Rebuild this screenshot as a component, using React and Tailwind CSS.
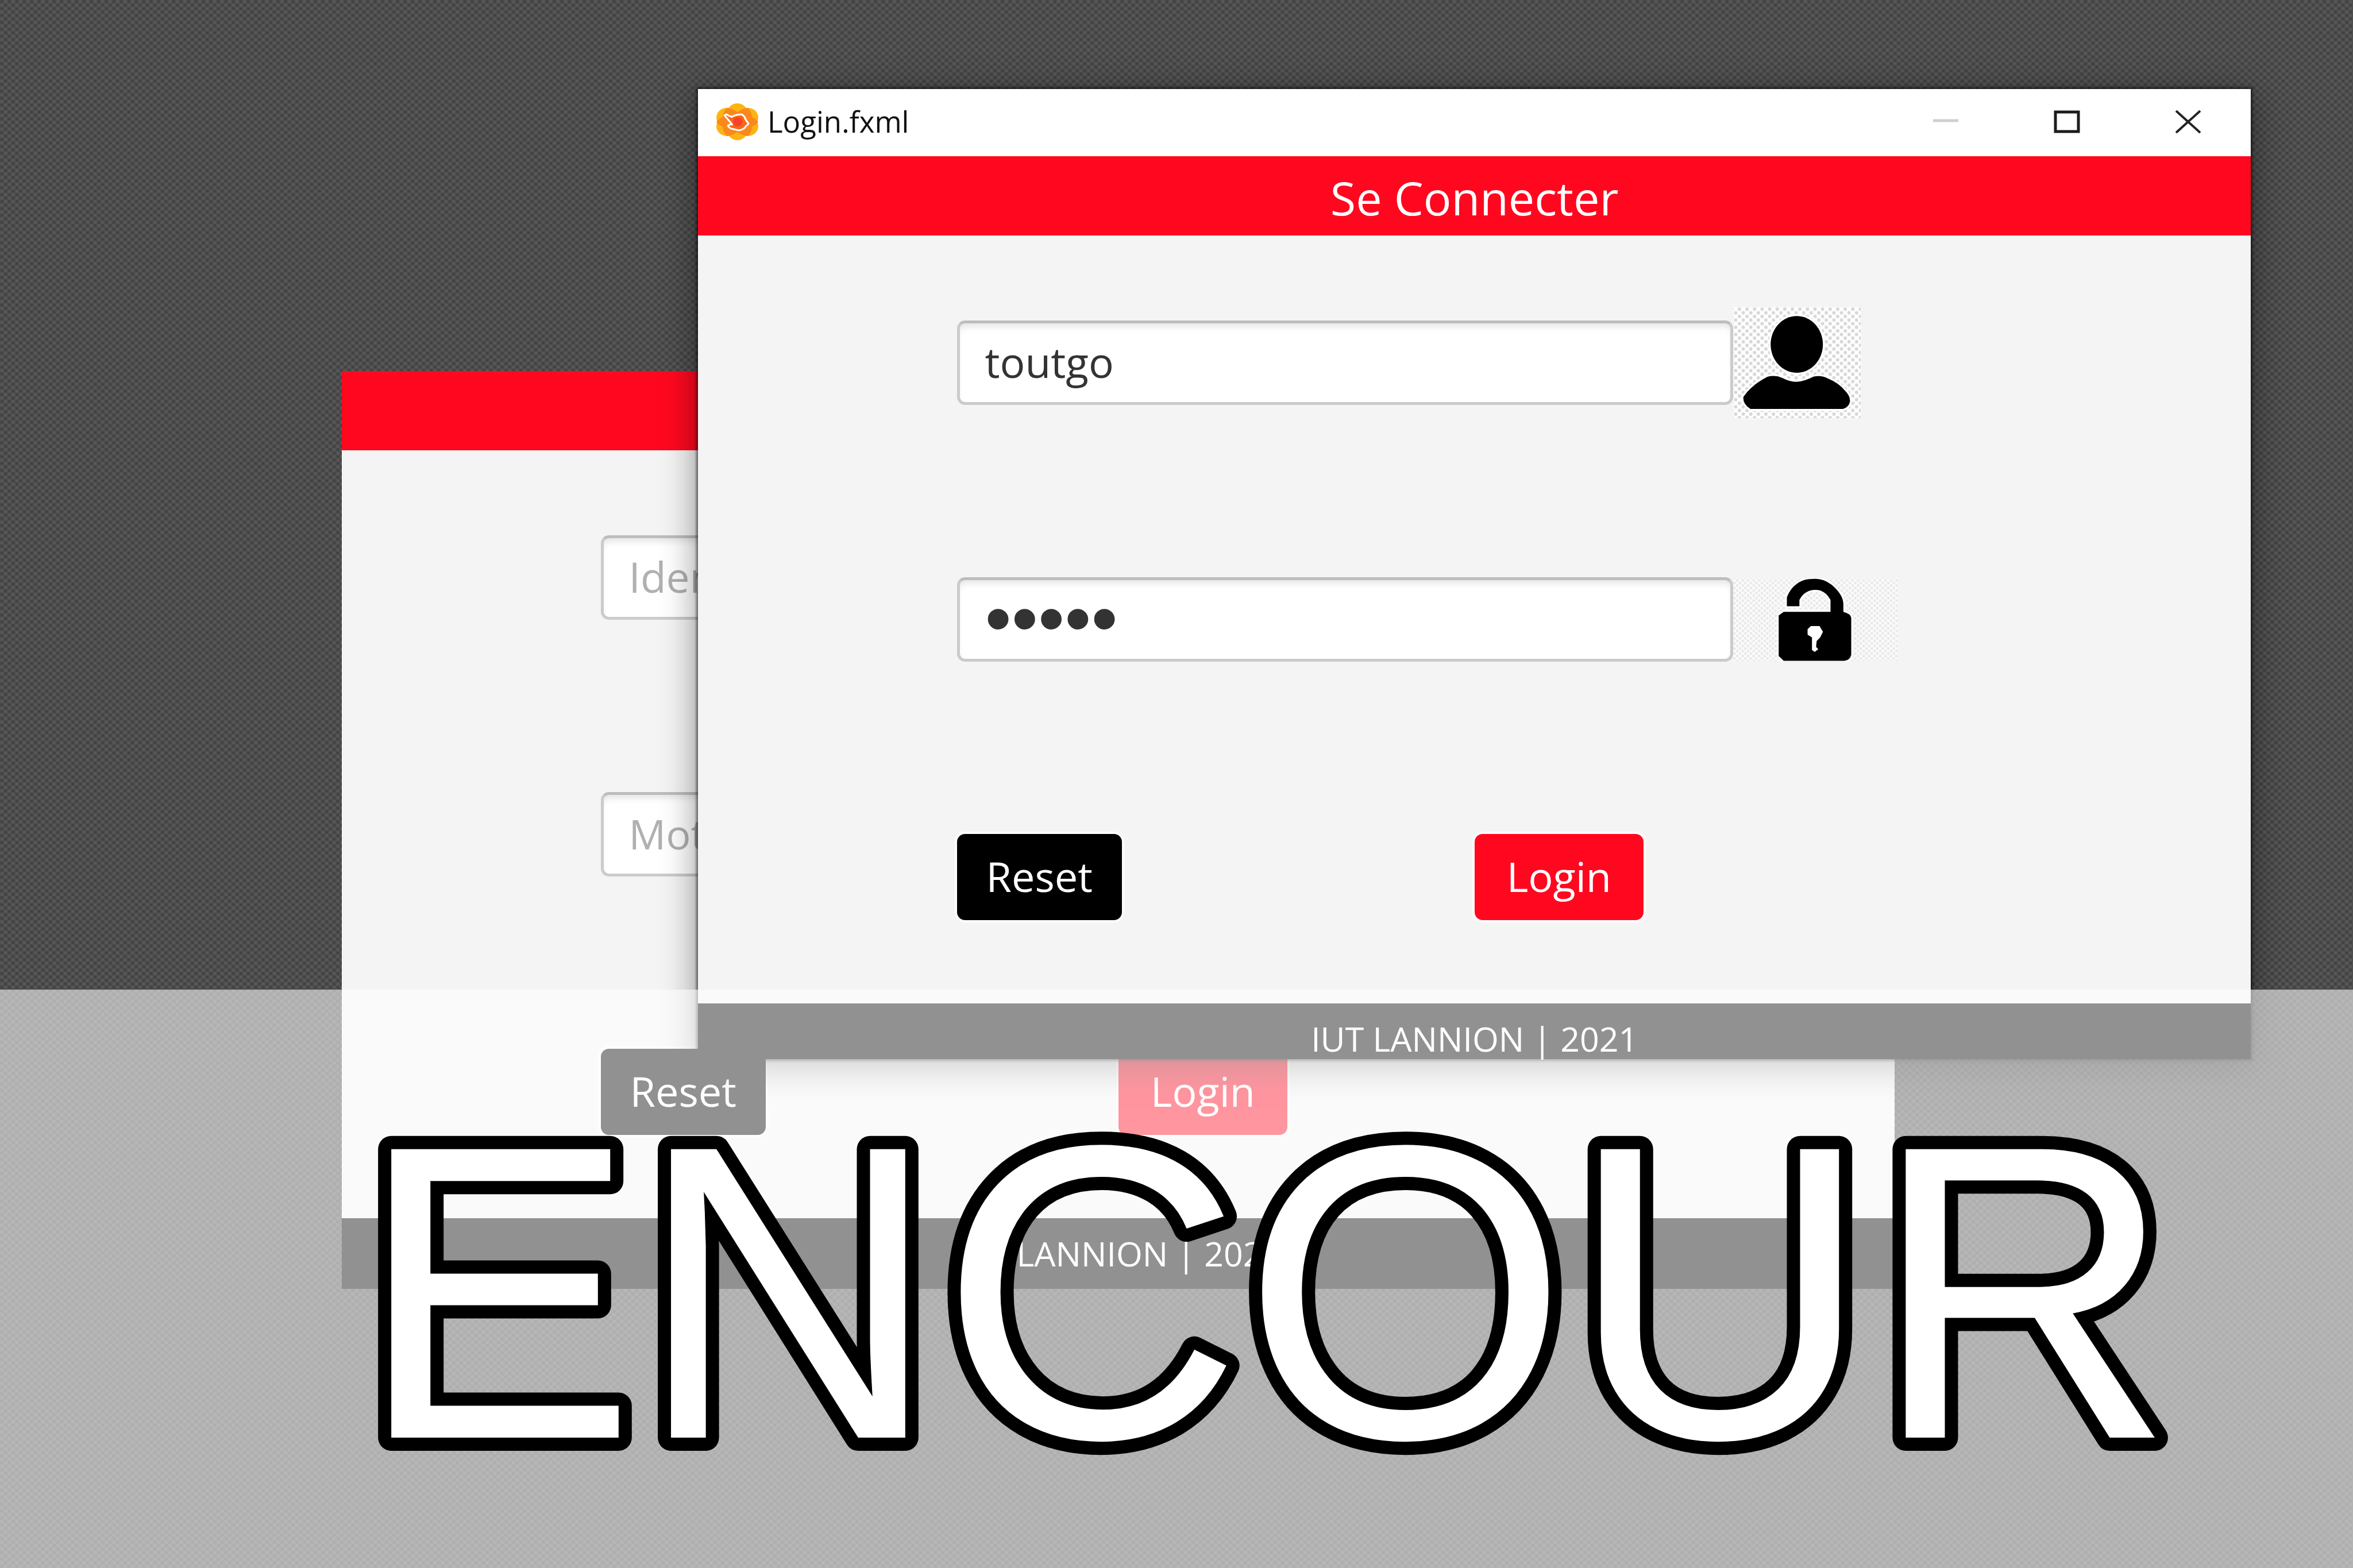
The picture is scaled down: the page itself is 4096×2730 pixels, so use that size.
import React from "react";

function AppIcon() {
  return (
    <svg viewBox="36 28 266 234" preserveAspectRatio="none" className="h-16 w-[73px]" aria-hidden="true">
      <g fill="#fdb412">
        <ellipse cx="169" cy="92" rx="66" ry="64" />
        <ellipse cx="169" cy="198" rx="66" ry="64" />
        <ellipse cx="104" cy="118" rx="68" ry="62" />
        <ellipse cx="234" cy="118" rx="68" ry="62" />
        <ellipse cx="104" cy="174" rx="68" ry="62" />
        <ellipse cx="234" cy="174" rx="68" ry="62" />
      </g>
      <path d="M104 56 Q140 60 169 84 Q198 60 234 56 Q262 80 262 116 Q290 128 301 146 Q290 168 262 176 Q262 212 234 236 Q198 232 169 210 Q140 232 104 236 Q78 212 76 176 Q48 168 37 146 Q48 128 76 116 Q78 80 104 56 Z" fill="#f9891c" />
      <path d="M88 104 Q100 92 114 106 L134 114 Q158 98 196 98 Q214 106 220 128 L240 158 L222 174 Q216 192 178 200 L136 190 Q112 182 110 170 L124 162 L136 162 Z" fill="#fa661a" stroke="#fff" strokeWidth="11" strokeLinejoin="round" />
      <circle cx="172" cy="146" r="30" fill="#f5432a" />
    </svg>
  );
}

function UserIcon() {
  return (
    <svg viewBox="130 100 810 705" preserveAspectRatio="none" className="h-[193px] w-[222px]" aria-hidden="true">
      <defs>
        <pattern id="user-dots" x="146" y="100" width="48" height="46" patternUnits="userSpaceOnUse">
          <rect width="48" height="46" fill="#fff" />
          <circle cx="24" cy="12" r="11" fill="#d8d8d8" />
          <circle cx="0" cy="35" r="11" fill="#d8d8d8" />
          <circle cx="48" cy="35" r="11" fill="#d8d8d8" />
        </pattern>
      </defs>
      <rect x="130" y="100" width="810" height="705" fill="url(#user-dots)" />
      <g stroke="#fff" strokeWidth="24" paintOrder="stroke">
        <ellipse cx="534" cy="336" rx="166" ry="180" />
        <path d="M240 747 Q190 715 195 670 Q250 590 350 541 Q400 530 440 548 Q490 574 534 574 Q580 572 640 541 Q690 530 730 552 Q800 580 840 630 Q875 665 872 700 Q865 735 828 747 Z" />
      </g>
    </svg>
  );
}

function LockIcon() {
  return (
    <svg viewBox="130 85 1050 525" preserveAspectRatio="none" className="h-[144px] w-[287px]" aria-hidden="true">
      <defs>
        <pattern id="lock-dots" x="138" y="90" width="35" height="32" patternUnits="userSpaceOnUse">
          <rect width="35" height="32" fill="#fafafa" />
          <circle cx="18" cy="8" r="8" fill="#e7e7e7" />
          <circle cx="0" cy="24" r="8" fill="#e7e7e7" />
          <circle cx="35" cy="24" r="8" fill="#e7e7e7" />
        </pattern>
      </defs>
      <rect x="130" y="85" width="1050" height="525" fill="url(#lock-dots)" />
      <path
        d="M420 320 L452 297 L750 297 L750 222 Q715 158 655 158 Q585 158 552 222 L552 262 L472 262 L472 205 Q500 130 570 100 Q600 88 655 88 Q710 88 760 128 Q832 190 832 250 L832 297 Q880 310 882 335 L882 570 Q875 605 840 608 L452 608 L420 578 Z"
        stroke="#fff" strokeWidth="22" paintOrder="stroke"
      />
      <path d="M625 388 L680 388 L702 424 L684 460 L662 482 L658 520 L672 534 L650 552 L632 540 L632 460 L604 442 L604 408 Z" fill="#fff" />
    </svg>
  );
}

function TitleBar({ title }) {
  return (
    <div className="flex h-[117px] items-center bg-white pb-1 pl-8 pr-1">
      <AppIcon />
      <span className="ml-4 flex-1 text-[51px] leading-none text-[#111]">{title}</span>
      <button type="button" aria-label="Minimize" disabled className="flex h-full w-[211px] items-center justify-center">
        <svg viewBox="0 0 46 40" className="h-10 w-[46px]"><path d="M1 18 H45" stroke="#cfcfcf" strokeWidth="5" /></svg>
      </button>
      <button type="button" aria-label="Maximize" className="flex h-full w-[211px] items-center justify-center">
        <svg viewBox="0 0 46 40" className="h-10 w-[46px]"><rect x="3" y="3" width="40" height="34" fill="none" stroke="#1c1c1c" strokeWidth="5" /></svg>
      </button>
      <button type="button" aria-label="Close" className="flex h-full w-[211px] items-center justify-center">
        <svg viewBox="0 0 46 40" className="h-10 w-[46px]"><path d="M2 1 L44 39 M44 1 L2 39" stroke="#222" strokeWidth="4" /></svg>
      </button>
    </div>
  );
}

const fieldClass =
  "col-span-3 col-start-2 h-[147px] w-full min-w-0 rounded-[14px] border-[5px] border-[#cbcbcb] border-t-[#bdbdbd] bg-white pb-1 pl-11 pr-4 text-[#333] outline-none placeholder:text-[#b0b0b0] shadow-[inset_0_10px_12px_-4px_rgba(0,0,0,0.1)]";

const buttonClass =
  "h-[150px] rounded-[14px] pb-1 text-[72px] leading-none text-white shadow-[0_0_3px_4px_rgba(255,255,255,0.8)]";

function LoginForm({ id, user, password, icons, footerClass }) {
  const passwordText = password ? "font-['Liberation_Sans',sans-serif] text-[132px]" : "text-[72px]";
  return (
    <form className="flex flex-col bg-[#f4f4f4]" onSubmit={(e) => e.preventDefault()}>
      <h1 className="flex h-[138px] items-center justify-center bg-[#ff081f] pt-1 text-[81px] leading-none text-white">Se Connecter</h1>
      <div className="grid h-[1337px] grid-cols-6 content-start gap-y-[300px] pt-[148px]">
        <input aria-label="Identifiant" id={`${id}-user`} type="text" defaultValue={user} placeholder="Identifiant" className={`${fieldClass} text-[73px]`} />
        <div className="col-span-2 flex h-[147px] items-center">{icons && <UserIcon />}</div>
        <input aria-label="Mot de passe" id={`${id}-password`} type="password" defaultValue={password} placeholder="Mot de passe" className={`${fieldClass} ${passwordText}`} />
        <div className="col-span-2 flex h-[147px] items-center">{icons && <LockIcon />}</div>
        <div className="col-start-2">
          <button type="reset" className={`${buttonClass} bg-black px-[51px]`}>Reset</button>
        </div>
        <div className="col-start-4">
          <button type="submit" className={`${buttonClass} bg-[#ff081f] px-[56px]`}>Login</button>
        </div>
      </div>
      <footer className={`bg-black pt-[25px] text-white ${footerClass}`}>
        <p className="text-center text-[59px] leading-[72px]">IUT LANNION | 2021</p>
      </footer>
    </form>
  );
}

export default function App() {
  return (
    <main className="relative min-h-screen overflow-hidden bg-[#4e4e4e] bg-[radial-gradient(circle_at_25%_25%,#3c3c3c_0,transparent_4px),radial-gradient(circle_at_75%_75%,#3c3c3c_0,transparent_4px),radial-gradient(circle_at_75%_25%,#5c5c5c_0,transparent_4px),radial-gradient(circle_at_25%_75%,#5c5c5c_0,transparent_4px)] bg-[length:13px_12px] font-['Open_Sans','Noto_Sans',sans-serif]">
      <section aria-label="Login" className="absolute left-[595px] top-[646px] w-[66%]">
        <LoginForm id="back" footerClass="pb-[26px]" />
      </section>

      <section aria-label="Login.fxml" className="absolute left-[1215px] top-[155px] w-[66%] shadow-[0_0_4px_3px_rgba(0,0,0,0.5),0_12px_56px_4px_rgba(0,0,0,0.4)]">
        <TitleBar title="Login.fxml" />
        <LoginForm id="front" user="toutgo" password="admin" icons footerClass="pb-0" />
      </section>

      <div className="absolute inset-x-0 bottom-0 top-[1723px] flex justify-center bg-white/57 pl-[310px] pt-[230px]">
        <svg viewBox="0 0 3300 600" className="h-[600px] w-[3300px]">
          <text
            x="1650" y="550" textAnchor="middle" fill="#fff" stroke="#000" strokeWidth="46" strokeLinejoin="round" paintOrder="stroke"
            className="font-['Liberation_Sans',sans-serif] text-[730px]"
          >
            ENCOUR
          </text>
        </svg>
      </div>
    </main>
  );
}
